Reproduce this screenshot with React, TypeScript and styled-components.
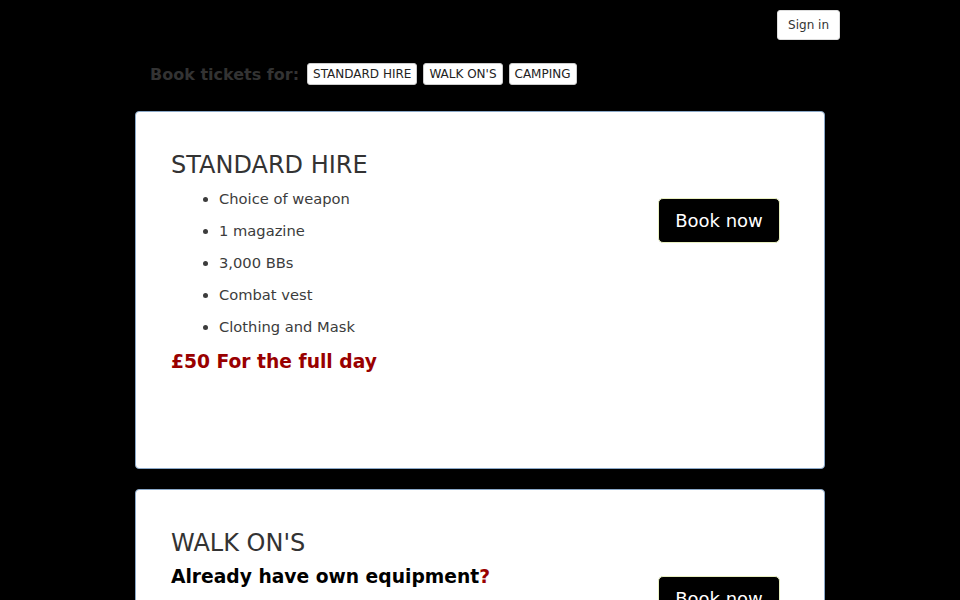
import React from "react";
import styled, { createGlobalStyle } from "styled-components";

const GlobalStyle = createGlobalStyle`
  html, body {
    margin: 0;
    padding: 0;
    background: #000;
  }
  body {
    font-family: "DejaVu Sans", "Noto Sans", sans-serif;
    color: #333;
  }
`;

type Ticket = {
  title: string;
  items?: string[];
  price?: string;
  question?: string;
};

const tickets: Ticket[] = [
  {
    title: "STANDARD HIRE",
    items: [
      "Choice of weapon",
      "1 magazine",
      "3,000 BBs",
      "Combat vest",
      "Clothing and Mask",
    ],
    price: "£50 For the full day",
  },
  {
    title: "WALK ON'S",
    question: "Already have own equipment",
  },
];

const App = () => {
  return (
    <>
      <GlobalStyle />
      <Page>
        <Header>
          <SignIn>Sign in</SignIn>
        </Header>
        <TicketBar>
          <BarLabel>Book tickets for:</BarLabel>
          <Pill>STANDARD HIRE</Pill>
          <Pill>WALK ON'S</Pill>
          <Pill>CAMPING</Pill>
        </TicketBar>
        {tickets.map((t) => (
          <Card key={t.title}>
            <CardBody>
              <Title>{t.title}</Title>
              {t.question && (
                <Question>
                  {t.question}
                  <Mark>?</Mark>
                </Question>
              )}
              {t.items && (
                <List>
                  {t.items.map((i) => (
                    <li key={i}>{i}</li>
                  ))}
                </List>
              )}
              {t.price && <Price>{t.price}</Price>}
            </CardBody>
            <Aside>
              <BookButton>Book now</BookButton>
            </Aside>
          </Card>
        ))}
      </Page>
    </>
  );
};

const Page = styled.div`
  width: 720px;
  margin: 0 auto;
  padding-top: 10px;
`;

const Header = styled.div`
  display: flex;
  justify-content: flex-end;
`;

const SignIn = styled.button`
  height: 30px;
  padding: 0 10px;
  background: #fff;
  border: 1px solid #ddd;
  border-radius: 3px;
  font-family: inherit;
  font-size: 12px;
  color: #333;
`;

const TicketBar = styled.div`
  display: flex;
  align-items: center;
  gap: 6px;
  margin: 23px 0 0 30px;
  height: 22px;
`;

const BarLabel = styled.span`
  font-size: 16px;
  font-weight: bold;
  color: #333;
  margin-right: 2px;
`;

const Pill = styled.span`
  display: inline-flex;
  align-items: center;
  height: 22px;
  padding: 0 5px;
  background: #fff;
  border: 1px solid #ccc;
  border-radius: 3px;
  font-size: 12px;
  color: #222;
  box-sizing: border-box;
`;

const Card = styled.div`
  margin: 26px 15px 20px;
  min-height: 358px;
  box-sizing: border-box;
  background: #fff;
  border: 1px solid #8aa8c8;
  border-radius: 4px;
  padding: 36px 44px 36px 35px;
  display: flex;
  justify-content: space-between;
  & + & {
    margin-top: 20px;
  }
`;

const CardBody = styled.div`
  display: flex;
  flex-direction: column;
`;

const Title = styled.h2`
  margin: 0;
  font-size: 24px;
  font-weight: normal;
  line-height: 34px;
  color: #333;
`;

const List = styled.ul`
  margin: 1px 0 0;
  padding-left: 48px;
  font-size: 14.7px;
  line-height: 32px;
  color: #3c3c3c;
`;

const Price = styled.div`
  margin-top: 5px;
  font-size: 18.7px;
  font-weight: bold;
  line-height: 28px;
  color: #990000;
`;

const Question = styled.div`
  margin-top: 6px;
  font-size: 18.7px;
  font-weight: bold;
  color: #000;
`;

const Mark = styled.span`
  color: #990000;
`;

const Aside = styled.div`
  padding-top: 50px;
`;

const BookButton = styled.button`
  width: 122px;
  height: 45px;
  background: #000;
  color: #fff;
  border: 1px solid #e8efc0;
  border-radius: 5px;
  font-family: inherit;
  font-size: 18px;
`;

export default App;
